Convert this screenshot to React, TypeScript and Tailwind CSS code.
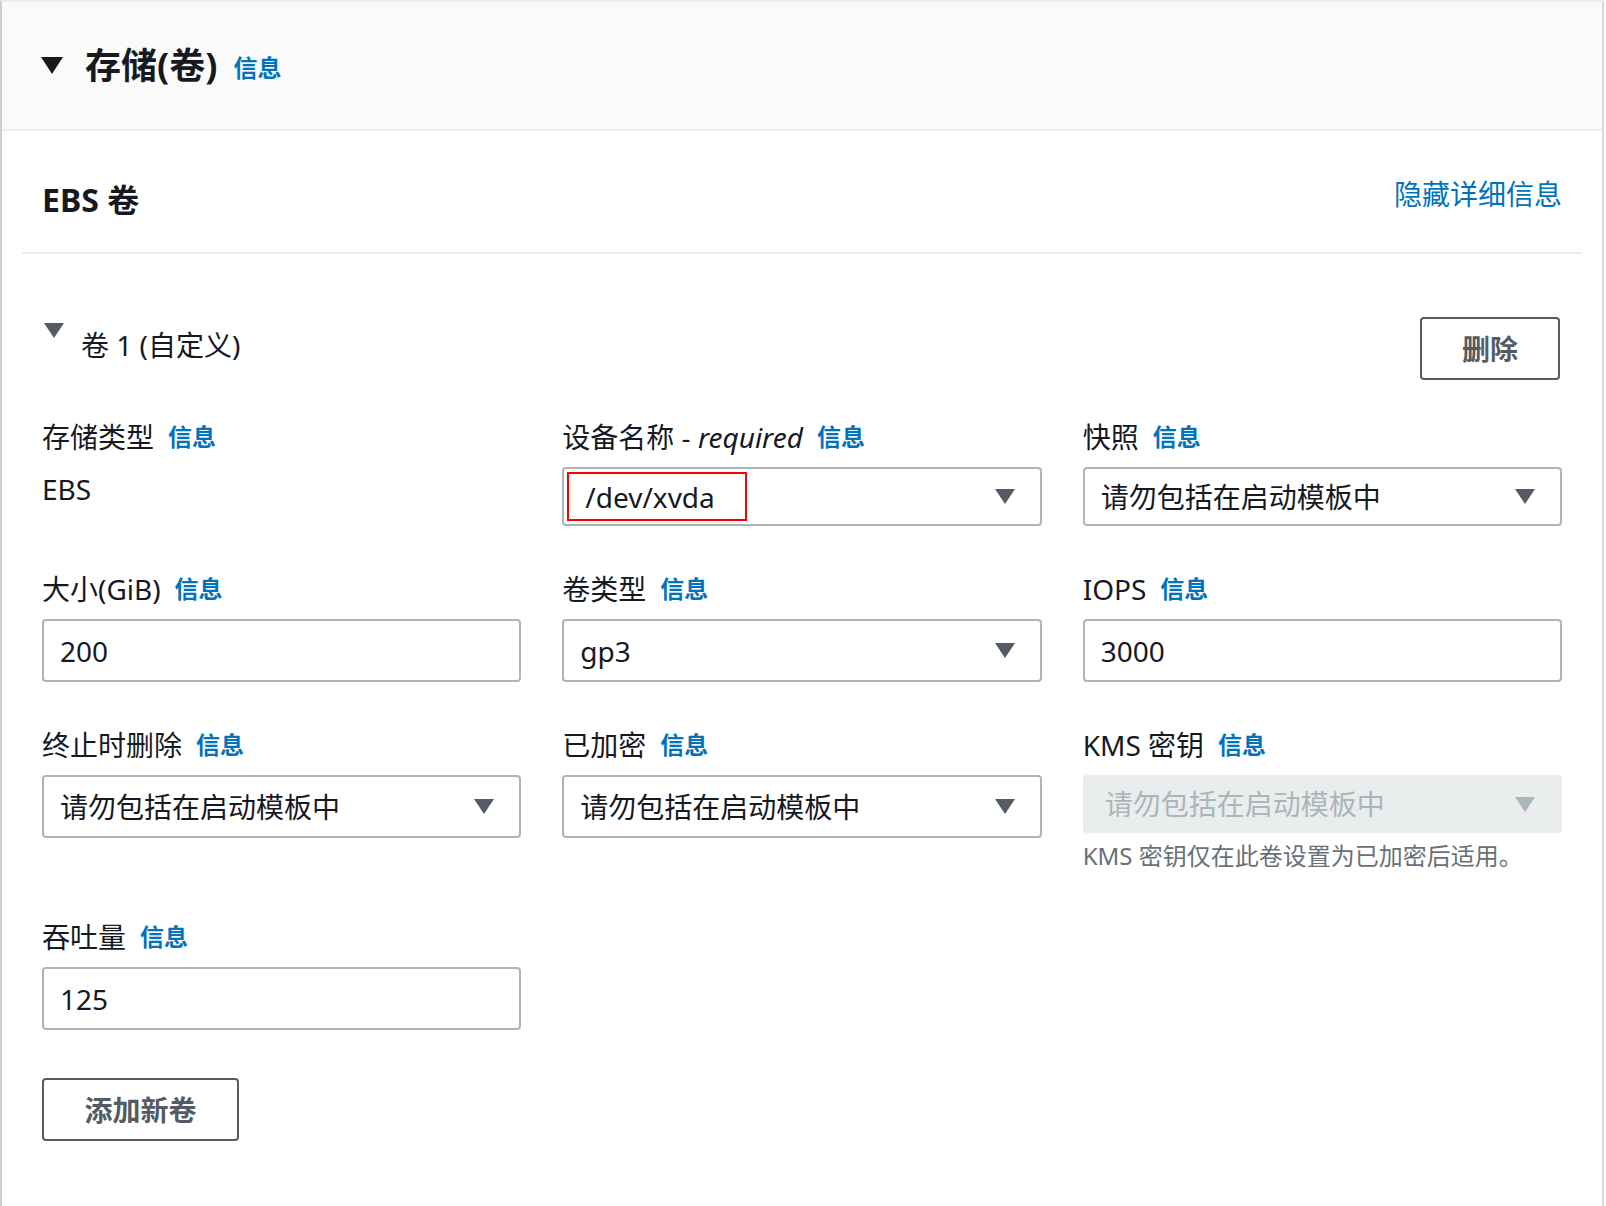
import React from "react";

const FONT = { fontFamily: '"Noto Sans", "Noto Sans CJK SC", sans-serif' };

function Caret({ color = "#545b64", w = 20, h = 15 }: { color?: string; w?: number; h?: number }) {
  return (
    <svg width={w} height={h} viewBox="0 0 20 15" className="shrink-0">
      <polygon points="0,0 20,0 10,15" fill={color} />
    </svg>
  );
}

function Info() {
  return <span className="text-[24px] font-bold text-[#0073bb] ml-[14px]">信息</span>;
}

function Label({ children }: { children: React.ReactNode }) {
  return (
    <div className="h-[40px] flex items-center text-[28px] text-[#16191f] whitespace-nowrap">
      {children}
      <Info />
    </div>
  );
}

function Select({ value, h = 59 }: { value: React.ReactNode; h?: number }) {
  return (
    <div
      className="mt-[10px] w-full border-2 border-[#aab7b8] rounded-[4px] bg-white flex items-center justify-between pl-[16px] pr-[25px] text-[28px] text-[#16191f]"
      style={{ height: h }}
    >
      <span>{value}</span>
      <Caret />
    </div>
  );
}

function Input({ value }: { value: string }) {
  return (
    <div className="mt-[10px] w-full h-[63px] border-2 border-[#aab7b8] rounded-[4px] bg-white flex items-center pl-[16px] text-[28px] text-[#16191f]">
      {value}
    </div>
  );
}

export default function App() {
  return (
    <div style={FONT} className="w-[1606px] h-[1206px] bg-white overflow-hidden">
      <div className="w-[1604px] h-[1206px] border-t-2 border-l-2 border-r-2 border-t-[#eaeded] border-l-[#c8cfcf] border-r-[#d5dbdb] bg-white">
        {/* Container header */}
        <div className="h-[129px] bg-[#fafafa] border-b-2 border-[#eaeded] flex items-center pl-[39px]">
          <svg width="22" height="17" viewBox="0 0 22 17" className="shrink-0">
            <polygon points="0,0 22,0 11,17" fill="#16191f" />
          </svg>
          <span className="ml-[22px] text-[36px] font-bold text-[#16191f]">存储(卷)</span>
          <span className="ml-[16px] text-[24px] font-bold text-[#0073bb] mt-[4px]">信息</span>
        </div>

        {/* Body */}
        <div className="px-[20px]">
          <div className="border-b-2 border-[#eaeded] pt-[50px] pb-[33px] px-[20px] flex items-center justify-between h-[123px]">
            <span className="text-[32px] font-bold text-[#16191f] leading-[40px]">EBS 卷</span>
            <span className="text-[28px] text-[#0073bb] leading-[40px] -mt-[12px]">隐藏详细信息</span>
          </div>

          <div className="px-[20px]">
            {/* Volume header */}
            <div className="mt-[63px] flex items-start justify-between">
              <div className="flex items-start h-[63px]">
                <div className="mt-[6px] ml-[2px]">
                  <Caret />
                </div>
                <span className="ml-[17px] text-[28px] text-[#16191f] leading-[57px]">卷 1 (自定义)</span>
              </div>
              <div className="w-[140px] h-[63px] border-2 border-[#545b64] rounded-[4px] flex items-center justify-center text-[28px] font-bold text-[#545b64] mr-[2px]">
                删除
              </div>
            </div>

            {/* Fields grid */}
            <div className="mt-[37px] grid grid-cols-3 gap-x-[41px] gap-y-[43px] items-start">
              <div>
                <Label>存储类型</Label>
                <div className="mt-[10px] h-[44px] flex items-center text-[28px] text-[#16191f]">EBS</div>
              </div>
              <div>
                <Label>
                  设备名称 -&nbsp;<i>required</i>
                </Label>
                <div className="mt-[10px] w-full h-[59px] border-2 border-[#aab7b8] rounded-[4px] bg-white flex items-center justify-between pl-[3px] pr-[25px] text-[28px] text-[#16191f]">
                  <span className="h-[49px] w-[180px] border-2 border-[#ff0000] flex items-center pl-[16px]">/dev/xvda</span>
                  <Caret />
                </div>
              </div>
              <div>
                <Label>快照</Label>
                <Select value="请勿包括在启动模板中" />
              </div>

              <div>
                <Label>大小(GiB)</Label>
                <Input value="200" />
              </div>
              <div>
                <Label>卷类型</Label>
                <Select value="gp3" h={63} />
              </div>
              <div>
                <Label>IOPS</Label>
                <Input value="3000" />
              </div>

              <div>
                <Label>终止时删除</Label>
                <Select value="请勿包括在启动模板中" h={63} />
              </div>
              <div>
                <Label>已加密</Label>
                <Select value="请勿包括在启动模板中" h={63} />
              </div>
              <div>
                <Label>KMS 密钥</Label>
                <div className="mt-[10px] w-full h-[58px] border-2 border-[#eaeded] rounded-[4px] bg-[#eaeded] flex items-center justify-between pl-[20px] pr-[25px] text-[28px] text-[#aab7b8]">
                  <span>请勿包括在启动模板中</span>
                  <Caret color="#aab7b8" />
                </div>
                <div className="mt-[5px] leading-[36px] text-[24px] text-[#687078]">KMS 密钥仅在此卷设置为已加密后适用。</div>
              </div>

              <div>
                <Label>吞吐量</Label>
                <Input value="125" />
              </div>
            </div>

            <div className="mt-[48px] w-[197px] h-[63px] border-2 border-[#545b64] rounded-[4px] flex items-center justify-center text-[28px] font-bold text-[#545b64]">
              添加新卷
            </div>
          </div>
        </div>
      </div>
    </div>
  );
}
